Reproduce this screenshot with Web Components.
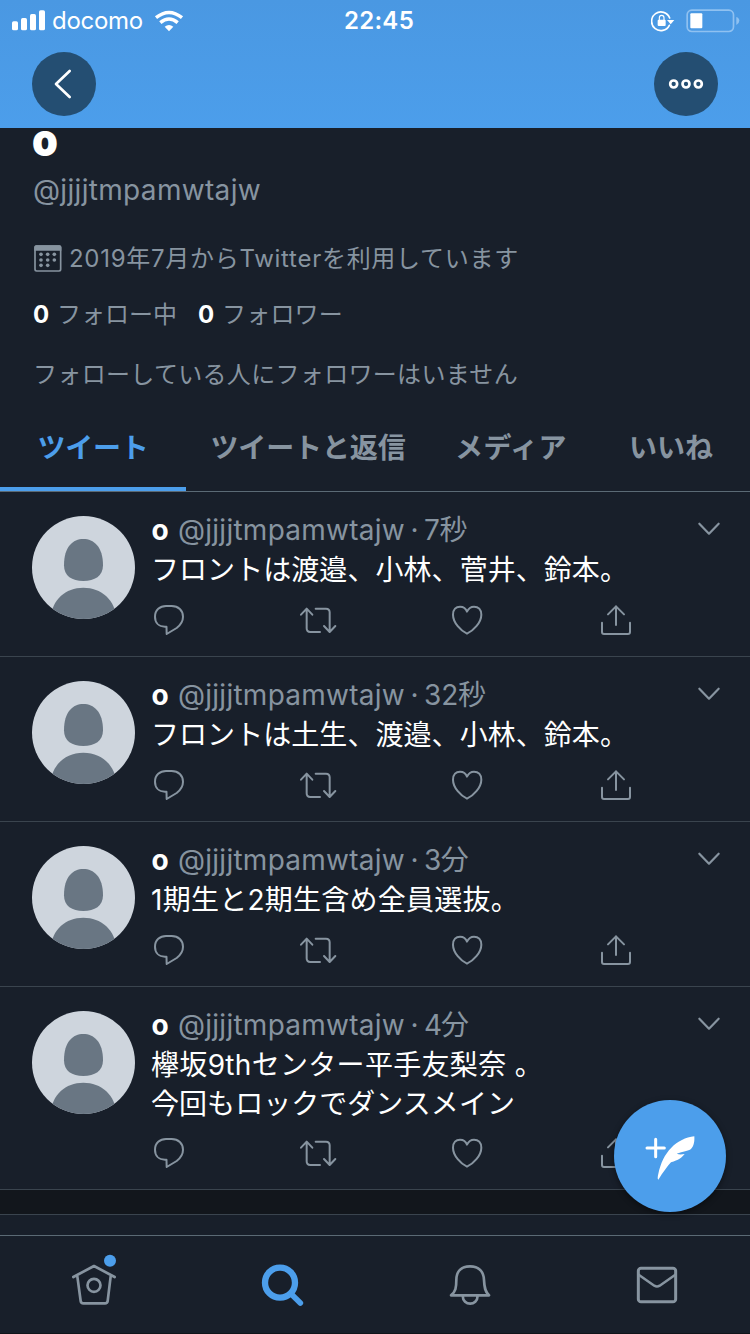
<!DOCTYPE html>
<html lang="ja">
<head>
<meta charset="utf-8">
<title>プロフィール</title>
<style>
html,body{margin:0;padding:0;background:#181f2a}
body{width:750px;height:1334px;overflow:hidden;font-family:Inter,"Noto Sans CJK JP",sans-serif;color:#fff;
--bg:#181f2a;--muted:#8794a0;--blue:#4c9eeb;--line:#3a444e}
</style>
</head>
<body>
<profile-screen></profile-screen>
<script>
const define=(name,html,init)=>customElements.define(name,class extends HTMLElement{
  connectedCallback(){
    if(this.shadowRoot)return;
    const t=document.createElement('template');
    t.innerHTML=typeof html==='function'?html(this):html;
    this.attachShadow({mode:'open'}).appendChild(t.content.cloneNode(true));
    if(init)init(this);
  }
});

/* A run of text tracked so that its advance equals the "w" attribute. */
define('fit-text','<style>:host{display:inline-block;white-space:pre;flex:none}</style><slot></slot>',el=>{
  const w=+el.getAttribute('w');
  const n=[...el.textContent].length;
  const d=(w-el.getBoundingClientRect().width)/n;
  el.style.letterSpacing=d.toFixed(3)+'px';
  el.style.width=w+'px';
});

const S='fill="none" stroke="currentColor" stroke-linecap="round" stroke-linejoin="round"';
/* name: [width, height, viewBox, markup]; drawn on a grid of 3 units per pixel */
const ICONS={
signal:[34,21,'36 29 102 63','<g fill="currentColor"><rect x="36" y="63" width="18" height="27" rx="5"/><rect x="63" y="53" width="18" height="37" rx="5"/><rect x="90" y="41" width="18" height="49" rx="5"/><rect x="117" y="30" width="18" height="60" rx="5"/></g>'],
wifi:[30,22,'462 27 90 66','<g fill="none" stroke="currentColor" stroke-width="10.5"><path d="M468 50Q507 19 546 50"/><path d="M481 65Q507 43 533 65"/></g><path fill="currentColor" d="M494 77Q507 67 520 77L507 91Z"/>'],
lock:[24,22,'826 27 72 66','<path d="M882 51A28 28 0 1 0 881 73" fill="none" stroke="currentColor" stroke-width="5" stroke-linecap="round"/><path fill="currentColor" d="M874 57H896L885 70Z"/><rect x="846" y="56" width="24" height="19" rx="3" fill="currentColor"/><path d="M851 57V50a7 7 0 0 1 14 0V57" fill="none" stroke="currentColor" stroke-width="3.5"/>'],
battery:[54,24,'932 26 162 72','<rect x="935.5" y="29.500" width="139" height="64" rx="14" fill="none" stroke="#8fc1f1" stroke-width="5"/><rect x="945" y="39" width="36" height="45" rx="3" fill="currentColor"/><path d="M1083 50Q1092 53 1092 61.500T1083 74Z" fill="#8fc1f1"/>'],
back:[64,64,'96 156 192 192','<path d="M209 213L168 252L209 291" '+S+' stroke-width="8"/>'],
more:[64,64,'837 156 192 192','<g fill="none" stroke="currentColor" stroke-width="8"><circle cx="896" cy="252" r="10.500"/><circle cx="933" cy="252" r="10.500"/><circle cx="970" cy="252" r="10.500"/></g>'],
calendar:[28,27,'103 73 84 81','<rect x="106" y="76" width="77" height="75" rx="5" '+S+' stroke-width="5"/><path fill="currentColor" d="M104 90V79q0-5 5-5h71q5 0 5 5v11z"/><g fill="currentColor"><circle cx="124" cy="101" r="5.500"/><circle cx="144" cy="101" r="5.500"/><circle cx="164" cy="101" r="5.500"/><circle cx="124" cy="118" r="5.500"/><circle cx="144" cy="118" r="5.500"/><circle cx="164" cy="118" r="5.500"/><circle cx="124" cy="134" r="5.500"/><circle cx="144" cy="134" r="5.500"/></g>'],
avatar:[103,103,'96 48 309 309','<clipPath id="c"><circle cx="250.500" cy="202.500" r="154.500"/></clipPath><g clip-path="url(#c)"><path fill="#ced5dd" d="M96 48h309v309H96z"/><path fill="#697683" d="M250 117C281 117 309 140 309 196C309 229 284 243 250 243C216 243 192 229 192 196C192 140 219 117 250 117Z"/><path fill="#697683" d="M150 357C157 298 196 263 250 263C304 263 344 298 351 357Z"/></g>'],
chevron:[24,16,'966 64 72 48','<path d="M973 72L1002 102L1031 72" '+S+' stroke-width="6.5"/>'],
reply:[32,32,'459 312 96 96','<path d="M499.500 380H495C476 380 465 368 465 350C465 330 480 318 498 318H515C535 318 549 331 549 350C549 366 540 376 530 384L500 402Z" '+S+' stroke-width="6"/>'],
retweet:[38,28,'897 318 114 84','<path d="M903 344L920 326L937 344M920 327V385Q920 396 931 396H960M947 326H978Q989 326 989 337V395M972 378L989 396L1006 378" '+S+' stroke-width="6"/>'],
like:[32,32,'228 312 96 96','<path d="M276 401C258 393 234 368 234 344C234 329 243 320 255 320C265 320 273 326 276 335C280 326 287 320 297 320C310 320 319 329 319 344C319 368 294 393 276 401Z" '+S+' stroke-width="6"/>'],
share:[32,32,'675 312 96 96','<path d="M723 375V319M699 343L723 319L747 343M681 368V396Q681 402 687 402H759Q765 402 765 396V368" '+S+' stroke-width="6"/>'],
home:[46,52,'216 763 138 156','<path d="M220 832L282 799L344 832M232 830L242 904Q243 911 250 911H315Q322 911 323 904L332 830" '+S+' stroke-width="8"/><circle cx="282" cy="857" r="19.500" fill="none" stroke="currentColor" stroke-width="8"/><circle cx="330" cy="783" r="18" fill="#4c9eeb"/>'],
search:[44,44,'783 790 132 132','<circle cx="840" cy="849" r="45" fill="none" stroke="currentColor" stroke-width="19"/><path d="M876 885L901 910" '+S+' stroke-width="17"/>'],
bell:[42,42,'222 792 126 126','<path d="M228 886C242 875 244 862 244 840C244 814 259 799 285 799C311 799 326 814 327 840C328 862 330 875 342 886ZM263 887C264 919 307 919 308 887" '+S+' stroke-width="8"/>'],
mail:[42,38,'783 798 126 114','<rect x="790" y="804.500" width="112" height="101" rx="8" '+S+' stroke-width="9"/><path d="M791 824L838 857Q846 862 854 857L901 824" '+S+' stroke-width="7.5"/>'],
compose:[112,112,'717 300 336 336','<path d="M816 444H868M842 418V470" '+S+' stroke-width="9"/><path fill="currentColor" d="M958 409C959 424 957 438 948 447C940 453 924 455 905 461C911 464 920 464 929 462C920 473 911 480 888 487C877 499 864 517 850 539C847 537 848 530 850 521C857 489 869 463 889 443C908 424 932 412 958 409Z"/>']
};
define('ui-icon',el=>{
  const [w,h,vb,m]=ICONS[el.getAttribute('name')];
  return `<style>:host{display:block;flex:none;width:${w}px;height:${h}px}svg{display:block}</style><svg width="${w}" height="${h}" viewBox="${vb}">${m}</svg>`;
});

define('status-bar',`<style>
:host{display:grid;grid-template-columns:1fr auto 1fr;height:40px;align-items:center;color:#fff;font-size:24px;line-height:40px}
.l,.r{display:flex;align-items:center}.l{padding-left:12px}
.l fit-text{margin:1px 9px 0 6px}.r{justify-content:flex-end;padding-right:10px;gap:11px}
.t{font-weight:600;padding:1px 0 0 8px}
</style><div class="l"><ui-icon name="signal"></ui-icon><fit-text w="91">docomo</fit-text><ui-icon name="wifi" style="margin-left:2px"></ui-icon></div>
<div class="t"><fit-text w="70">22:45</fit-text></div>
<div class="r"><ui-icon name="lock"></ui-icon><ui-icon name="battery"></ui-icon></div>`);

define('nav-header',`<style>
:host{display:block;height:128px;background:linear-gradient(#4a98e2,#4c9eeb)}
.b{display:flex;justify-content:space-between;padding:12px 32px 0}
.c{width:64px;height:64px;border-radius:50%;background:#244e72;color:#fff}
</style><status-bar></status-bar><div class="b"><div class="c"><ui-icon name="back"></ui-icon></div><div class="c"><ui-icon name="more"></ui-icon></div></div>`);

define('profile-info',`<style>
:host{display:block;height:279px;padding:0 33px;color:var(--muted);font-size:24px}
div{display:flex;white-space:pre}
.n{height:28px;line-height:23px;font-size:45px;font-weight:900;color:#fff;margin-left:-1px;transform:scaleX(.92);transform-origin:0 0}
.h{height:52px;line-height:68px;font-size:28px}
.j{height:56px;line-height:102px;align-items:flex-start}
.j ui-icon{margin:37px 7px 0 1px}
.f{height:56px;line-height:102px}
b{color:#fff;font-weight:700;width:24px}
.k{line-height:110px}
</style>
<div class="n">o</div>
<div class="h"><fit-text w="228">@jjjjtmpamwtajw</fit-text></div>
<div class="j"><ui-icon name="calendar"></ui-icon><fit-text w="450">2019年7月からTwitterを利用しています</fit-text></div>
<div class="f"><b>0</b><fit-text w="141">フォロー中</fit-text><b>0</b><fit-text w="121">フォロワー</fit-text></div>
<div class="k"><fit-text w="485">フォローしている人にフォロワーはいません</fit-text></div>`,el=>{
  const f=el.shadowRoot.querySelector('.f fit-text');
  f.style.letterSpacing='0';
});

define('profile-tabs',`<style>
:host{display:flex;height:84px;border-bottom:1px solid #5b6a75;color:var(--muted);font-size:28px;font-weight:700;line-height:82px}
div{box-sizing:border-box;height:84px;display:flex;justify-content:center}
.a{width:186px;color:var(--blue);border-bottom:4px solid var(--blue)}
</style><div class="a"><fit-text w="111">ツイート</fit-text></div><div style="width:244px"><fit-text w="195">ツイートと返信</fit-text></div><div style="width:162px"><fit-text w="112">メディア</fit-text></div><div style="width:158px"><fit-text w="84">いいね</fit-text></div>`);

define('tweet-item',el=>`<style>
:host{display:grid;grid-template-columns:103px 1fr;column-gap:17px;padding:24px 29px 0 32px;border-bottom:1px solid var(--line);height:${el.hasAttribute('tall')?178:140}px;font-size:28px}
.h{display:flex;height:33px;line-height:28px;color:var(--muted)}
.h b{color:#fff;width:26px;font-weight:700;margin-left:-.5px;margin-right:.5px}
.d{width:19px;text-align:center}
.h ui-icon{margin:5px 0 0 auto}
.t{display:flex;flex-direction:column;align-items:flex-start;line-height:39px;height:${el.hasAttribute('tall')?76:38}px;padding-top:2px;margin-left:-1px;color:#fff}
.a{display:grid;grid-template-columns:repeat(4,149px);width:596px;justify-items:center;align-items:center;margin:15px 0 0 -58px;height:32px;color:var(--muted)}
</style><ui-icon name="avatar"></ui-icon><div><div class="h"><b>o</b><fit-text w="227">@jjjjtmpamwtajw</fit-text><span class="d">·</span><fit-text w="${el.getAttribute('tw')}">${el.getAttribute('time')}</fit-text><ui-icon name="chevron"></ui-icon></div>
<div class="t"><slot></slot></div>
<div class="a"><ui-icon name="reply"></ui-icon><ui-icon name="retweet"></ui-icon><ui-icon name="like"></ui-icon><ui-icon name="share"></ui-icon></div></div>`);

define('compose-button',`<style>:host{position:absolute;left:614px;top:1100px;width:112px;height:112px;border-radius:50%;background:var(--blue);color:#fff;box-shadow:0 2px 6px rgba(0,0,0,.45)}</style><ui-icon name="compose"></ui-icon>`);

define('bottom-bar',`<style>
:host{display:grid;grid-template-columns:repeat(4,1fr);height:97px;border-top:1px solid #5b6a75;border-bottom:1px solid #10141a;color:var(--muted);justify-items:center;align-items:start}
</style><ui-icon name="home" style="margin-top:18px;transform:translateX(1px)"></ui-icon><ui-icon name="search" style="margin-top:27px;color:var(--blue);transform:translateX(2px)"></ui-icon><ui-icon name="bell" style="margin-top:28px;transform:translateX(1px)"></ui-icon><ui-icon name="mail" style="margin-top:30px;transform:translateX(1px)"></ui-icon>`);

define('profile-screen',`<style>
:host{display:block;position:relative;width:750px;height:1334px;overflow:hidden;background:var(--bg)}
.g{height:24px;background:#12161c;border-bottom:1px solid var(--line)}
.s{height:20px}
</style>
<nav-header></nav-header><profile-info></profile-info><profile-tabs></profile-tabs>
<tweet-item time="7秒" tw="43"><fit-text w="477">フロントは渡邉、小林、菅井、鈴本。</fit-text></tweet-item>
<tweet-item time="32秒" tw="62"><fit-text w="477">フロントは土生、渡邉、小林、鈴本。</fit-text></tweet-item>
<tweet-item time="3分" tw="44"><fit-text w="368">1期生と2期生含め全員選抜。</fit-text></tweet-item>
<tweet-item time="4分" tw="44" tall><fit-text w="392">欅坂9thセンター平手友梨奈 。</fit-text><fit-text w="364">今回もロックでダンスメイン</fit-text></tweet-item>
<div class="g"></div><div class="s"></div><bottom-bar></bottom-bar><compose-button></compose-button>`);
</script>
</body>
</html>
